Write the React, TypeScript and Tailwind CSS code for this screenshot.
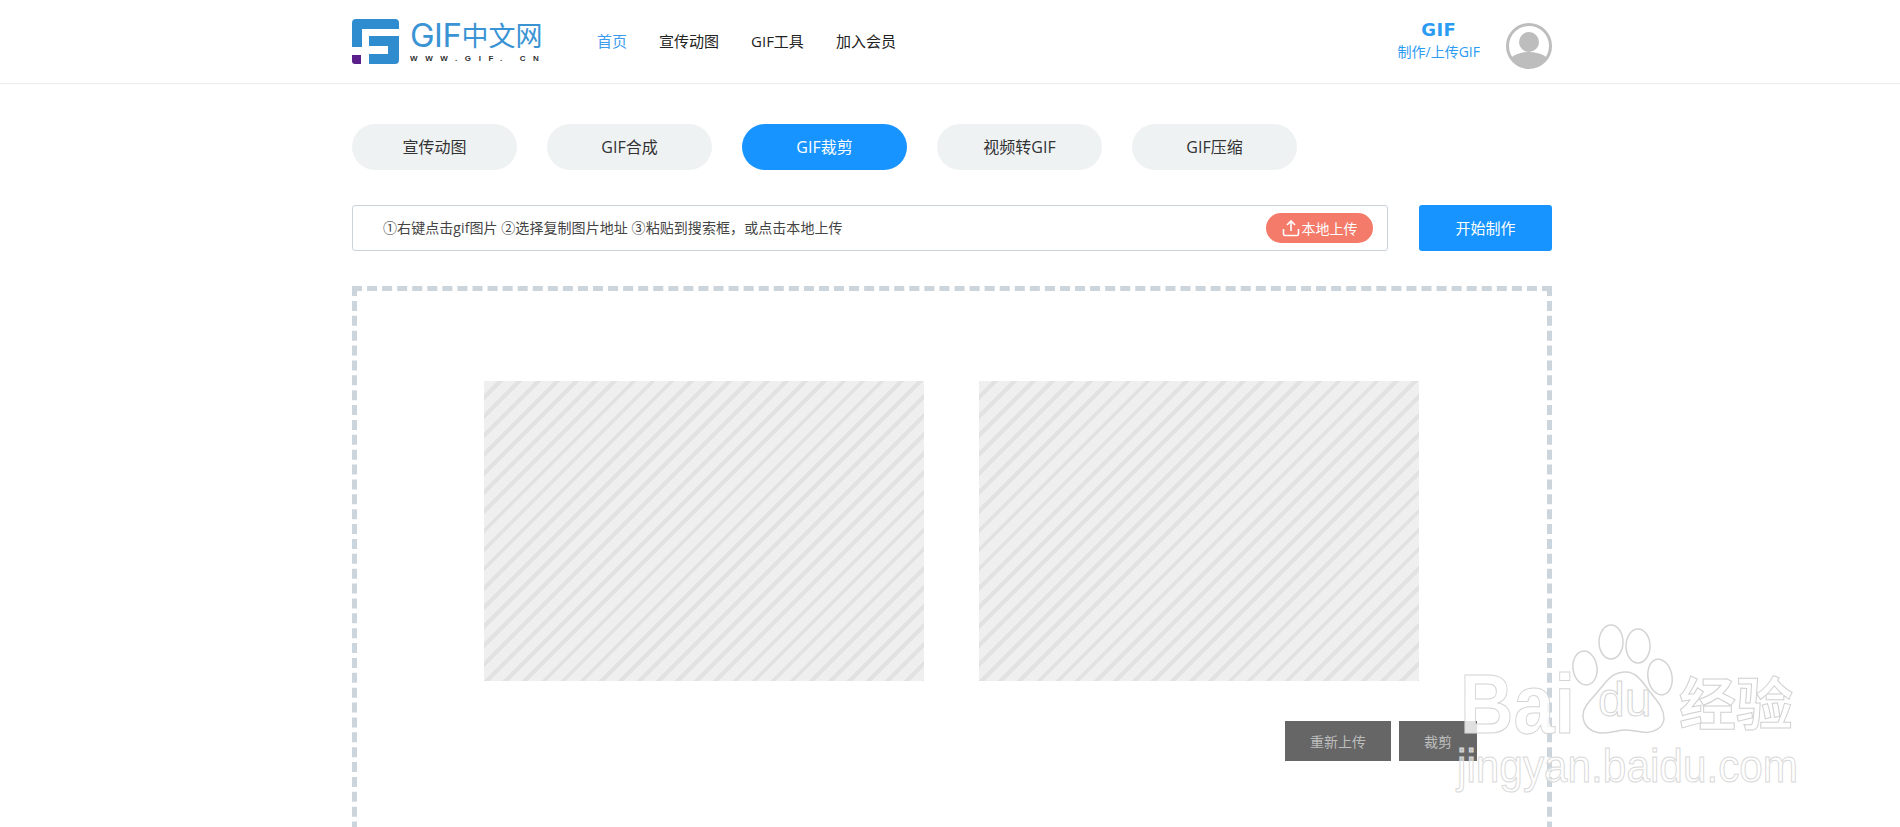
import React from 'react';

const tabs = ['宣传动图', 'GIF合成', 'GIF裁剪', '视频转GIF', 'GIF压缩'];
const navItems = ['首页', '宣传动图', 'GIF工具', '加入会员'];

const LogoMark = () => (
  <svg width="47" height="46" viewBox="0 0 47 46" className="shrink-0">
    <path d="M4 0H43a4 4 0 0 1 4 4V10H10V28H0V4a4 4 0 0 1 4-4Z" fill="#2f8dcf" />
    <path d="M17 17H47V41a4 4 0 0 1-4 4H17V35H36V27H17Z" fill="#2f8dcf" />
    <path d="M0 36H9V45H3a3 3 0 0 1-3-3Z" fill="#5b1f8c" />
  </svg>
);

const Logo = () => (
  <div className="flex items-center shrink-0 w-[192px]">
    <LogoMark />
    <div className="flex flex-col ml-[11px] shrink-0">
      <div className="flex items-center h-[32px] leading-none text-[#3a94d4] whitespace-nowrap">
        <span className="font-['Inter'] font-normal text-[33px] tracking-[-0.5px]">GIF</span>
        <span className="text-[27px]">中文网</span>
      </div>
      <div className="text-[8px] leading-[10px] mt-[2px] font-bold text-[#333] font-['Liberation_Sans'] tracking-[7.6px] whitespace-nowrap">
        WWW.GIF. CN
      </div>
    </div>
  </div>
);

const Avatar = () => (
  <svg width="46" height="46" viewBox="0 0 46 46">
    <defs>
      <clipPath id="avatar-clip">
        <circle cx="23" cy="23" r="21" />
      </clipPath>
    </defs>
    <circle cx="23" cy="23" r="21.5" fill="#fff" stroke="#bdbdbd" strokeWidth="3" />
    <g clipPath="url(#avatar-clip)" fill="#bdbdbd">
      <circle cx="23" cy="19" r="10" />
      <ellipse cx="23" cy="41" rx="21" ry="12" />
    </g>
  </svg>
);

const Watermark = () => (
  <div className="absolute left-[1455px] top-[622px] w-[350px] h-[170px] pointer-events-none">
    <div className="absolute left-[5px] top-[39px] text-[84px] leading-[86px] font-bold font-['Liberation_Sans'] text-white/80 [-webkit-text-stroke:1px_#d4d4d4] origin-left scale-x-[0.88]">
      Bai
    </div>
    <svg width="110" height="116" viewBox="0 0 110 116" className="absolute left-[113px] top-[0px]" fill="#fff" fillOpacity="0.6" stroke="#d4d4d4" strokeWidth="1.5">
      <ellipse cx="17" cy="46" rx="12" ry="17" transform="rotate(-8 17 46)" />
      <ellipse cx="43" cy="20" rx="12" ry="17" />
      <ellipse cx="70" cy="24" rx="12" ry="17" />
      <ellipse cx="92" cy="55" rx="12" ry="18" transform="rotate(-10 92 55)" />
      <path d="M58 50c10 0 16 9 24 20 8 10 14 16 14 27-1 9-11 15-22 13-8-1-11-2-17-2-7 0-12 3-22 3-12 0-20-7-20-18 0-9 9-16 17-26 8-9 12-17 26-17Z" />
    </svg>
    <div className="absolute left-[143px] top-[50px] text-[48px] leading-[56px] font-['Liberation_Sans'] text-white/60 [-webkit-text-stroke:1px_#d4d4d4]">
      du
    </div>
    <div className="absolute left-[224px] top-[46px] text-[57px] leading-[70px] whitespace-nowrap font-bold text-white/70 [-webkit-text-stroke:1px_#d0d0d0]">
      经验
    </div>
    <div className="absolute left-[2px] top-[118px] text-[46px] leading-[52px] whitespace-nowrap font-['Liberation_Sans'] text-white/60 [-webkit-text-stroke:1px_#d8d8d8] origin-left scale-x-[0.92]">
      jingyan.baidu.com
    </div>
  </div>
);

const App = () => {
  return (
    <div className="relative h-[827px] overflow-hidden bg-white font-['Open_Sans','Noto_Sans_CJK_SC',sans-serif] text-[#333]">
      <header className="h-[84px] border-b border-[#ececec]">
        <div className="w-[1200px] h-[83px] ml-[352px] flex items-center">
          <Logo />
          <nav className="ml-[53px] flex items-center gap-[32px] text-[15px] text-[#222]">
            {navItems.map((item, i) => (
              <a key={item} className={i === 0 ? 'text-[#3b9cf0]' : ''}>
                {item}
              </a>
            ))}
          </nav>
          <div className="ml-auto flex items-center gap-[26px]">
            <div className="flex flex-col items-center text-[#2b9bf4]">
              <span className="font-['DejaVu_Sans'] font-bold text-[18px] leading-[15px] tracking-[0.5px]">GIF</span>
              <span className="text-[14px] leading-[20px] mt-[5px]">制作/上传GIF</span>
            </div>
            <div className="mt-[8px] flex">
              <Avatar />
            </div>
          </div>
        </div>
      </header>

      <main className="w-[1200px] ml-[352px] pt-[40px]">
        <div className="flex gap-[30px]">
          {tabs.map((tab) => (
            <button
              key={tab}
              className={`w-[165px] h-[46px] rounded-full text-[16px] pb-[1px] ${
                tab === 'GIF裁剪' ? 'bg-[#1794ff] text-white' : 'bg-[#eff2f3] text-[#333]'
              }`}
            >
              {tab}
            </button>
          ))}
        </div>

        <div className="flex justify-between mt-[35px]">
          <div className="w-[1036px] h-[46px] border border-[#c9d2db] rounded-[3px] flex items-center justify-between pl-[30px] pr-[14px]">
            <span className="text-[14px] text-[#444] tracking-[0.07px] pb-[2px]">①右键点击gif图片 ②选择复制图片地址 ③粘贴到搜索框，或点击本地上传</span>
            <button className="w-[107px] h-[30px] rounded-full bg-[#f47a69] text-white text-[14px] flex items-center justify-center gap-[2px]">
              <svg width="18" height="18" viewBox="0 0 18 18" fill="none" stroke="#fff" strokeWidth="1.6">
                <path d="M9 12V2M5 6l4-4 4 4M1.500 10v5a1.500 1.500 0 0 0 1.500 1.500h12a1.500 1.500 0 0 0 1.500-1.500v-5" />
              </svg>
              本地上传
            </button>
          </div>
          <button className="w-[133px] h-[46px] rounded-[3px] bg-[#1794ff] text-white text-[15px]">开始制作</button>
        </div>

        <section className="mt-[35px] h-[620px] border-[5px] border-dashed border-[#ccd4dc] pt-[90px]">
          <div className="flex gap-[55px] ml-[127px]">
            <div className="w-[440px] h-[300px] bg-[repeating-linear-gradient(135deg,#efefef_0px,#efefef_9.500px,#e2e2e2_9.500px,#e2e2e2_13.500px)]" />
            <div className="w-[440px] h-[300px] bg-[repeating-linear-gradient(135deg,#efefef_0px,#efefef_9.500px,#e2e2e2_9.500px,#e2e2e2_13.500px)]" />
          </div>
          <div className="flex justify-end gap-[8px] mt-[40px] pr-[70px]">
            <button className="w-[106px] h-[40px] bg-[#666] text-[#bdbdbd] text-[14px]">重新上传</button>
            <button className="w-[78px] h-[40px] bg-[#666] text-[#bdbdbd] text-[14px]">裁剪</button>
          </div>
        </section>
      </main>

      <Watermark />
    </div>
  );
};

export default App;
